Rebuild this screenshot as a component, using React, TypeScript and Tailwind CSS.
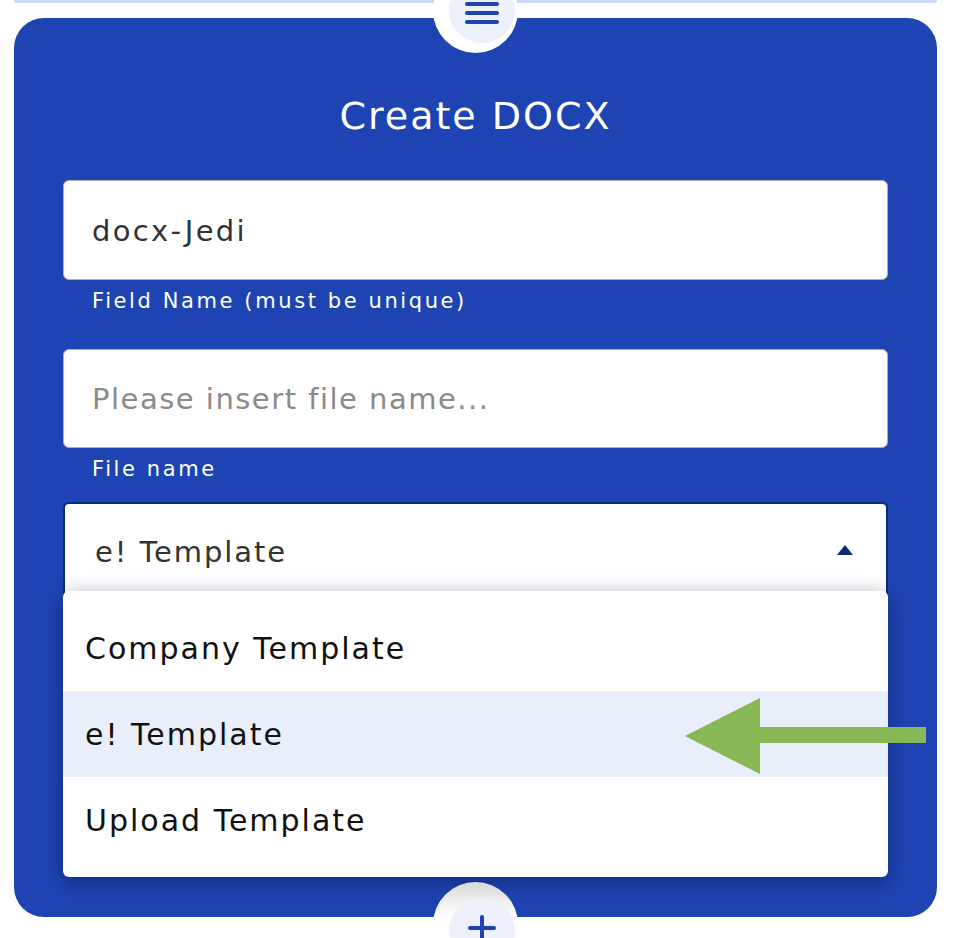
import * as React from "react";

const font = { fontFamily: '"DejaVu Sans", "Noto Sans", sans-serif' };

const options = ["Company Template", "e! Template", "Upload Template"];

const CreateDocx = () => {
    const selected = "e! Template";

    return (
        <div className="relative w-[954px] h-[938px] overflow-hidden bg-white" style={font}>
            {/* bottom edge of the card above */}
            <div className="ml-[14px] mr-[17px] h-[3px] rounded-b-[30px] bg-[#cdd8f4]" />

            {/* main card */}
            <div className="ml-[14px] mr-[17px] mt-[15px] h-[899px] rounded-[30px] bg-[#1e44b3] px-[49px] pt-[74px]">
                <h2 className="text-center text-[38px] leading-[48px] tracking-[2px] text-white">Create DOCX</h2>

                <div className="mt-[40px] flex h-[100px] items-center rounded-[6px] border border-[#a9adb8] bg-white pl-[28px] pt-[3px] text-[29px] tracking-[2.3px] text-[#333333]">
                    docx-Jedi
                </div>
                <p className="mt-[6px] pl-[29px] text-[21px] leading-[30px] tracking-[2.6px] text-white">
                    Field Name (must be unique)
                </p>

                <div className="mt-[33px] flex h-[99px] items-center rounded-[6px] border border-[#a9adb8] bg-white pl-[28px] pt-[3px] text-[29px] tracking-[1.5px] text-[#8a8a8a]">
                    Please insert file name...
                </div>
                <p className="mt-[6px] pl-[29px] text-[21px] leading-[30px] tracking-[2.6px] text-white">File name</p>

                <div className="relative mt-[18px]">
                    <div className="flex h-[100px] items-start rounded-[6px] border-2 border-[#0c2a7a] bg-white pl-[30px] pr-[32px] pt-[27px] text-[29px] tracking-[1.9px] text-[#333333]">
                        <span className="flex-1">{selected}</span>
                        <svg width="18" height="12" viewBox="0 0 18 12" className="mt-[13px]">
                            <polygon points="9,1 17,11 1,11" fill="#0c2a7a" />
                        </svg>
                    </div>

                    {/* dropdown menu */}
                    <div className="absolute left-0 right-0 top-[89px] rounded-[6px] bg-white py-[14px] shadow-[0_6px_22px_rgba(0,10,60,0.45)]">
                        {options.map((opt) => (
                            <div
                                key={opt}
                                className={
                                    "flex h-[86px] items-center pl-[22px] text-[30px] tracking-[2px] text-[#111111] " +
                                    (opt === selected ? "bg-[#e8eefa]" : "")
                                }
                            >
                                {opt}
                            </div>
                        ))}
                    </div>
                </div>
            </div>

            {/* top round button */}
            <div className="absolute left-[433px] top-[-32px] flex h-[85px] w-[85px] rounded-full bg-white pl-[16px] pt-[9px]">
                <div className="flex h-[66px] w-[66px] items-end justify-center rounded-full bg-[#edf1fc] pb-[17px]">
                    <svg width="34" height="24" viewBox="0 0 34 24">
                        <g stroke="#1e44b3" strokeWidth="4" strokeLinecap="round">
                            <line x1="2" y1="2" x2="32" y2="2" />
                            <line x1="2" y1="11" x2="32" y2="11" />
                            <line x1="2" y1="20" x2="32" y2="20" />
                        </g>
                    </svg>
                </div>
            </div>

            {/* bottom round button */}
            <div className="absolute left-[433px] top-[882px] flex h-[85px] w-[85px] rounded-full bg-[linear-gradient(#d9d9d9,#ffffff_40%)] pl-[16px] pt-[16px]">
                <div className="flex h-[66px] w-[66px] items-start justify-center rounded-full bg-[#edf1fc] pt-[17px]">
                    <svg width="28" height="40" viewBox="0 0 28 40">
                        <g stroke="#1e44b3" strokeWidth="4" strokeLinecap="round">
                            <line x1="2" y1="13" x2="26" y2="13" />
                            <line x1="14" y1="2" x2="14" y2="38" />
                        </g>
                    </svg>
                </div>
            </div>

            {/* green arrow */}
            <svg className="absolute left-[685px] top-[698px]" width="242" height="76" viewBox="0 0 242 76">
                <polygon points="0,38 75,0 75,29 241,29 241,45 75,45 75,76" fill="#88b755" />
            </svg>
        </div>
    );
};

export default CreateDocx;
